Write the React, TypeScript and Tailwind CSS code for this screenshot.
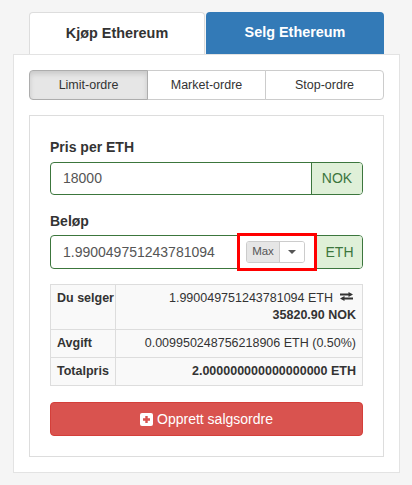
import { useState } from 'react';

type Tab = 'buy' | 'sell';
type OrderType = 'limit' | 'market' | 'stop';

const orderTypes: { id: OrderType; label: string }[] = [
  { id: 'limit', label: 'Limit-ordre' },
  { id: 'market', label: 'Market-ordre' },
  { id: 'stop', label: 'Stop-ordre' },
];

function TransferIcon() {
  return (
    <svg width="13" height="9" viewBox="0 0 13 9" className="inline-block ml-[7px] mr-[3px] align-[1px]">
      <path d="M0 1.5h8.5V0L13 2.5 8.5 5V3.5H0z" fill="#333" />
      <path d="M13 5.5H4.5V4L0 6.5 4.5 9V7.5H13z" fill="#333" />
    </svg>
  );
}

function PlusSquareIcon() {
  return (
    <svg width="13" height="13" viewBox="0 0 13 13" className="shrink-0">
      <rect x="0" y="0" width="13" height="13" rx="2" fill="#fff" />
      <path d="M6.5 3v7M3 6.5h7" stroke="#d9534f" strokeWidth="2.4" />
    </svg>
  );
}

export default function App() {
  const [tab, setTab] = useState<Tab>('sell');
  const [orderType, setOrderType] = useState<OrderType>('limit');
  const [price, setPrice] = useState('18000');
  const [amount, setAmount] = useState('1.990049751243781094');

  return (
    <div className="min-h-[485px] bg-[#f5f5f5] pt-3 font-['Liberation_Sans',Arial,sans-serif] text-[#333]">
      <div className="ml-[13px] w-[387px]">
        {/* kjøp / selg faner */}
        <div className="flex gap-px px-4">
          <button
            onClick={() => setTab('buy')}
            className={`w-[176px] h-[42px] rounded-t-[4px] text-[14.4px] font-bold ${
              tab === 'buy' ? 'bg-[#337ab7] text-white' : 'bg-white border border-b-0 border-[#ddd] text-[#333]'
            }`}
          >
            Kjøp Ethereum
          </button>
          <button
            onClick={() => setTab('sell')}
            className={`flex-1 h-[42px] rounded-t-[4px] text-[14.4px] font-bold ${
              tab === 'sell' ? 'bg-[#337ab7] text-white' : 'bg-white border border-b-0 border-[#ddd] text-[#333]'
            }`}
          >
            Selg Ethereum
          </button>
        </div>

        <div className="border border-[#e3e3e3] bg-white px-[15px] pt-[15px] pb-[15px]">
          {/* ordretype */}
          <div className="flex h-[30px]">
            {orderTypes.map((item, i) => (
              <button
                key={item.id}
                onClick={() => setOrderType(item.id)}
                className={`flex-1 text-[12.5px] border ${i > 0 ? '-ml-px' : ''} ${
                  i === 0 ? 'rounded-l-[4px]' : ''
                } ${i === orderTypes.length - 1 ? 'rounded-r-[4px]' : ''} ${
                  orderType === item.id
                    ? 'bg-[#e6e6e6] border-[#adadad] shadow-[inset_0_3px_5px_rgba(0,0,0,0.125)] relative z-10'
                    : 'bg-white border-[#ccc]'
                }`}
              >
                {item.label}
              </button>
            ))}
          </div>

          <div className="mt-[15px] border border-[#ddd] px-5 pt-[21px] pb-5">
            <label className="block text-[14px] font-bold leading-5 mb-[5px]">Pris per ETH</label>
            <div className="flex h-[33px] border border-[#3c763d] rounded-[4px] overflow-hidden">
              <input
                value={price}
                onChange={(e) => setPrice(e.target.value)}
                className="flex-1 min-w-0 pl-3 text-[14px] text-[#555] outline-none"
              />
              <span className="w-[51px] flex items-center justify-center border-l border-[#3c763d] bg-[#dff0d8] text-[14px] text-[#3c763d]">
                NOK
              </span>
            </div>

            <label className="block mt-4 text-[14px] font-bold leading-5 mb-[4px]">Beløp</label>
            <div className="relative">
              <div className="flex h-[34px] border border-[#3c763d] rounded-[4px] overflow-hidden">
                <input
                  value={amount}
                  onChange={(e) => setAmount(e.target.value)}
                  className="flex-1 min-w-0 pl-3 text-[14px] text-[#555] outline-none"
                />
                <div className="self-center flex h-[22px] mr-[11px] rounded-[3px] border border-[#ccc] overflow-hidden">
                  <button className="w-[33px] bg-[#e6e6e6] border-r border-[#ccc] text-[11.5px] text-[#555]">Max</button>
                  <button className="w-[24px] bg-white flex items-center justify-center">
                    <span className="block w-0 h-0 border-l-[4px] border-r-[4px] border-t-[4px] border-l-transparent border-r-transparent border-t-[#555]" />
                  </button>
                </div>
                <span className="w-[46px] flex items-center justify-center border-l border-[#3c763d] bg-[#dff0d8] text-[14px] text-[#3c763d]">
                  ETH
                </span>
              </div>
              {/* markering rundt max-knappen */}
              <div className="absolute left-[187px] top-[-2px] w-[80px] h-[38px] border-[3px] border-[#ff0000] pointer-events-none" />
            </div>

            {/* oppsummering */}
            <div className="mt-[15px] border border-[#ddd] bg-[#f9f9f9] text-[12.5px] leading-[17px]">
              <div className="flex border-b border-[#ddd]">
                <div className="w-[65px] shrink-0 border-r border-[#ddd] pl-[6px] py-[5px] font-bold whitespace-nowrap">Du selger</div>
                <div className="flex-1 px-[6px] py-[5px] text-right">
                  <div>
                    1.990049751243781094 ETH
                    <TransferIcon />
                  </div>
                  <div className="font-bold">35820.90 NOK</div>
                </div>
              </div>
              <div className="flex border-b border-[#ddd]">
                <div className="w-[65px] shrink-0 border-r border-[#ddd] pl-[6px] py-[5px] font-bold whitespace-nowrap">Avgift</div>
                <div className="flex-1 px-[6px] py-[5px] text-right">0.009950248756218906 ETH (0.50%)</div>
              </div>
              <div className="flex">
                <div className="w-[65px] shrink-0 border-r border-[#ddd] pl-[6px] py-[5px] font-bold whitespace-nowrap">Totalpris</div>
                <div className="flex-1 px-[6px] py-[5px] text-right font-bold">2.000000000000000000 ETH</div>
              </div>
            </div>

            <button className="mt-4 w-full h-[34px] flex items-center justify-center gap-[4px] rounded-[4px] border border-[#d43f3a] bg-[#d9534f] text-white text-[14px]">
              <PlusSquareIcon />
              Opprett salgsordre
            </button>
          </div>
        </div>
      </div>
    </div>
  );
}
